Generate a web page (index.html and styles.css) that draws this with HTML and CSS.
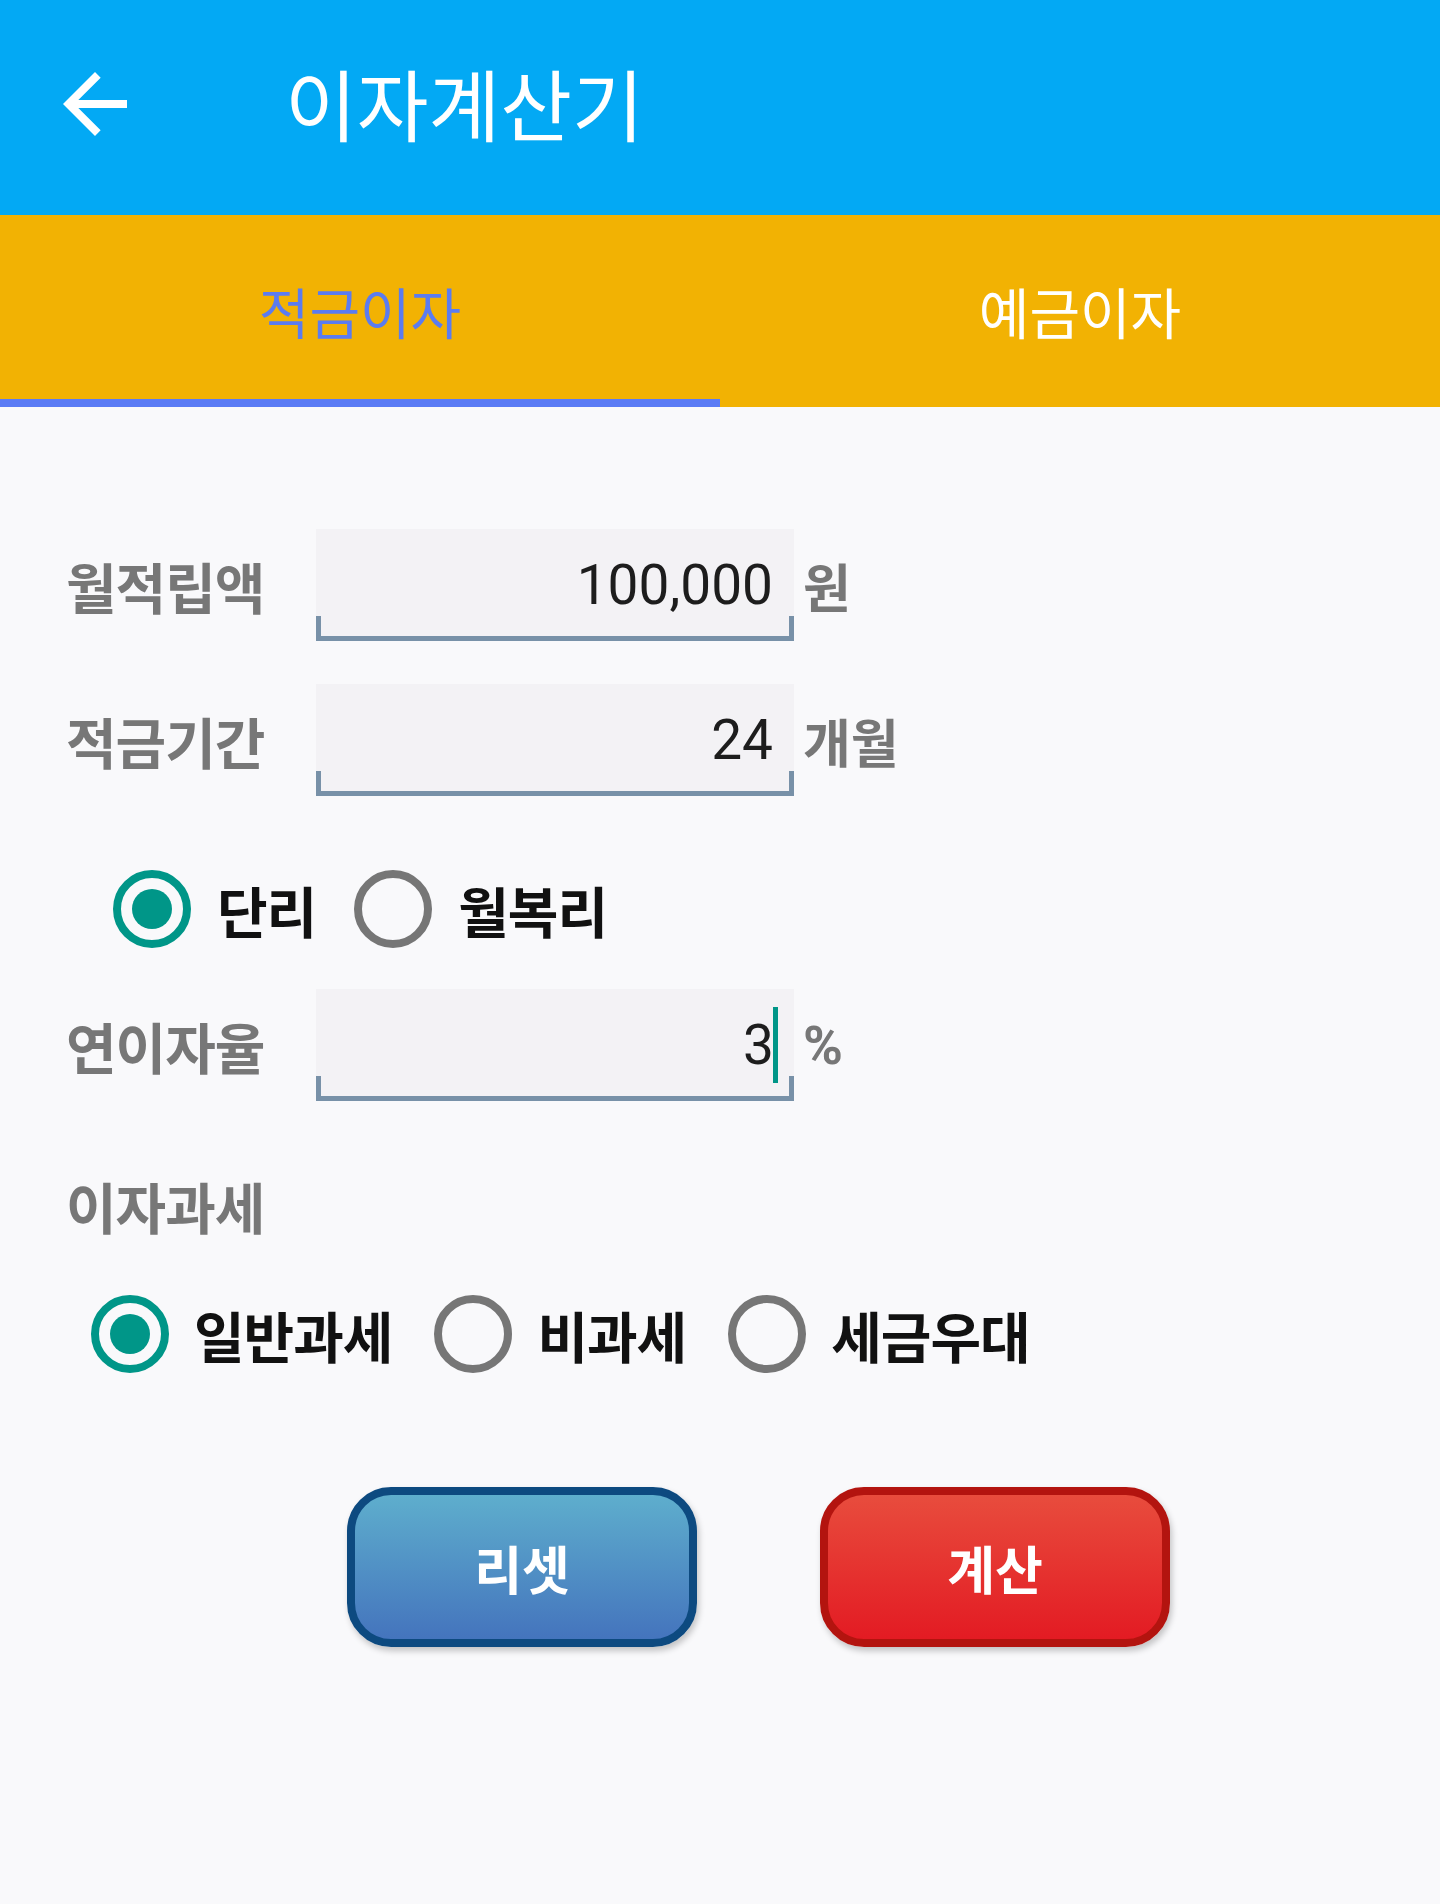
FILE: index.html
```html
<!DOCTYPE html>
<html lang="ko">
<head>
<meta charset="utf-8">
<title>이자계산기</title>
<link rel="stylesheet" href="styles.css">
</head>
<body>
<header class="appbar">
  <svg class="back" viewBox="0 0 24 24" width="96" height="96" aria-hidden="true">
    <path d="M20 11H7.83l5.59-5.59L12 4l-8 8 8 8 1.41-1.41L7.83 13H20v-2z" fill="#ffffff"/>
  </svg>
  <h1 class="title">이자계산기</h1>
</header>
<nav class="tabs">
  <div class="tab tab-active">적금이자</div>
  <div class="tab">예금이자</div>
</nav>
<main class="content">
  <div class="field-row row-amount">
    <span class="label">월적립액</span>
    <div class="input"><span class="value">100,000</span></div>
    <span class="unit">원</span>
  </div>
  <div class="field-row row-period">
    <span class="label">적금기간</span>
    <div class="input"><span class="value">24</span></div>
    <span class="unit">개월</span>
  </div>
  <div class="radio-row row-interest">
    <label class="radio"><span class="dot checked"></span><span class="radio-text">단리</span></label>
    <label class="radio"><span class="dot"></span><span class="radio-text">월복리</span></label>
  </div>
  <div class="field-row row-rate">
    <span class="label">연이자율</span>
    <div class="input input-focus"><span class="value">3</span><span class="cursor"></span></div>
    <span class="unit unit-pct">%</span>
  </div>
  <div class="section-label">이자과세</div>
  <div class="radio-row row-tax">
    <label class="radio"><span class="dot checked"></span><span class="radio-text">일반과세</span></label>
    <label class="radio"><span class="dot"></span><span class="radio-text">비과세</span></label>
    <label class="radio"><span class="dot"></span><span class="radio-text">세금우대</span></label>
  </div>
  <div class="buttons">
    <button class="btn btn-reset">리셋</button>
    <button class="btn btn-calc">계산</button>
  </div>
</main>
</body>
</html>
```
FILE: styles.css
```css
* { box-sizing: border-box; }

html, body {
  margin: 0;
  padding: 0;
}

body {
  width: 1440px;
  min-height: 1904px;
  background: #f9f9fb;
  font-family: Roboto, "Noto Sans CJK KR", sans-serif;
  overflow: hidden;
}

.appbar {
  height: 215px;
  background: #03a9f4;
  display: flex;
  align-items: center;
}

.back {
  display: block;
  margin-left: 47px;
  margin-bottom: 8px;
  flex: none;
}

.title {
  margin: 0 0 12px 142px;
  font-family: "Noto Sans CJK KR", sans-serif;
  font-weight: 400;
  font-size: 78px;
  letter-spacing: 0;
  color: #ffffff;
  line-height: 1;
}

.tabs {
  display: flex;
  height: 192px;
  background: #f2b203;
}

.tab {
  flex: 1;
  display: flex;
  align-items: center;
  justify-content: center;
  font-family: "Noto Sans CJK KR", sans-serif;
  font-size: 55px;
  letter-spacing: 0;
  color: #ffffff;
  padding-top: 6px;
  border-bottom: 8px solid transparent;
}

.tab-active {
  color: #5b7cf0;
  border-bottom-color: #5b7cf5;
}

.content {
  padding-top: 122px;
}

.field-row {
  display: flex;
  align-items: center;
  height: 112px;
  padding-left: 66px;
}

.row-period { margin-top: 43px; }
.row-rate { margin-top: 40px; }

.label {
  width: 250px;
  font-family: "Noto Sans CJK KR", sans-serif;
  font-size: 55px;
  font-weight: 700;
  letter-spacing: -1px;
  color: #777777;
}

.input {
  position: relative;
  width: 478px;
  height: 112px;
  background: #f3f2f5;
  display: flex;
  align-items: center;
  justify-content: flex-end;
  padding-right: 21px;
}

.input::after {
  content: "";
  position: absolute;
  left: 0;
  right: 0;
  bottom: 0;
  height: 20px;
  border: 5px solid #7891a8;
  border-top: none;
}

.input-focus { padding-right: 16px; }

.value {
  font-family: Roboto, sans-serif;
  font-size: 55px;
  color: #1d1d1d;
  line-height: 1;
}

.cursor {
  display: inline-block;
  width: 5px;
  height: 76px;
  margin-left: -1px;
  background: #009688;
}

.unit {
  margin-left: 9px;
  font-family: "Noto Sans CJK KR", sans-serif;
  font-size: 52px;
  font-weight: 700;
  color: #777777;
}

.unit-pct {
  font-family: Roboto, sans-serif;
  font-size: 54px;
}

.radio-row {
  display: flex;
  align-items: center;
  height: 80px;
}

.row-interest {
  margin-top: 73px;
  padding-left: 113px;
  gap: 38px;
}

.row-tax {
  margin-top: 59px;
  padding-left: 91px;
  gap: 42px;
}

.radio {
  display: flex;
  align-items: center;
  gap: 26px;
}

.row-tax .radio { gap: 25px; }

.dot {
  width: 78px;
  height: 78px;
  border-radius: 50%;
  border: 8px solid #767676;
  display: flex;
  align-items: center;
  justify-content: center;
  flex: none;
}

.dot.checked {
  border-color: #009688;
}

.dot.checked::before {
  content: "";
  width: 40px;
  height: 40px;
  border-radius: 50%;
  background: #009688;
}

.radio-text {
  font-family: "Noto Sans CJK KR", sans-serif;
  font-size: 55px;
  font-weight: 700;
  color: #111111;
  letter-spacing: -1px;
}

.section-label {
  margin-top: 74px;
  padding-left: 66px;
  height: 60px;
  display: flex;
  align-items: center;
  font-family: "Noto Sans CJK KR", sans-serif;
  font-size: 55px;
  font-weight: 700;
  letter-spacing: -1px;
  color: #777777;
}

.buttons {
  display: flex;
  margin-top: 113px;
  padding-left: 347px;
  gap: 123px;
}

.btn {
  width: 350px;
  height: 160px;
  border-radius: 44px;
  border: 8px solid;
  font-family: "Noto Sans CJK KR", sans-serif;
  font-size: 52px;
  font-weight: 700;
  color: #ffffff;
  box-shadow: 2px 4px 6px rgba(0, 0, 0, 0.22);
  padding: 0;
}

.btn-reset {
  border-color: #0d4a80;
  background: linear-gradient(to bottom, #5eaecd, #4474bd);
}

.btn-calc {
  border-color: #b3140f;
  background: linear-gradient(to bottom, #e84c3d, #e31b23);
}
```
